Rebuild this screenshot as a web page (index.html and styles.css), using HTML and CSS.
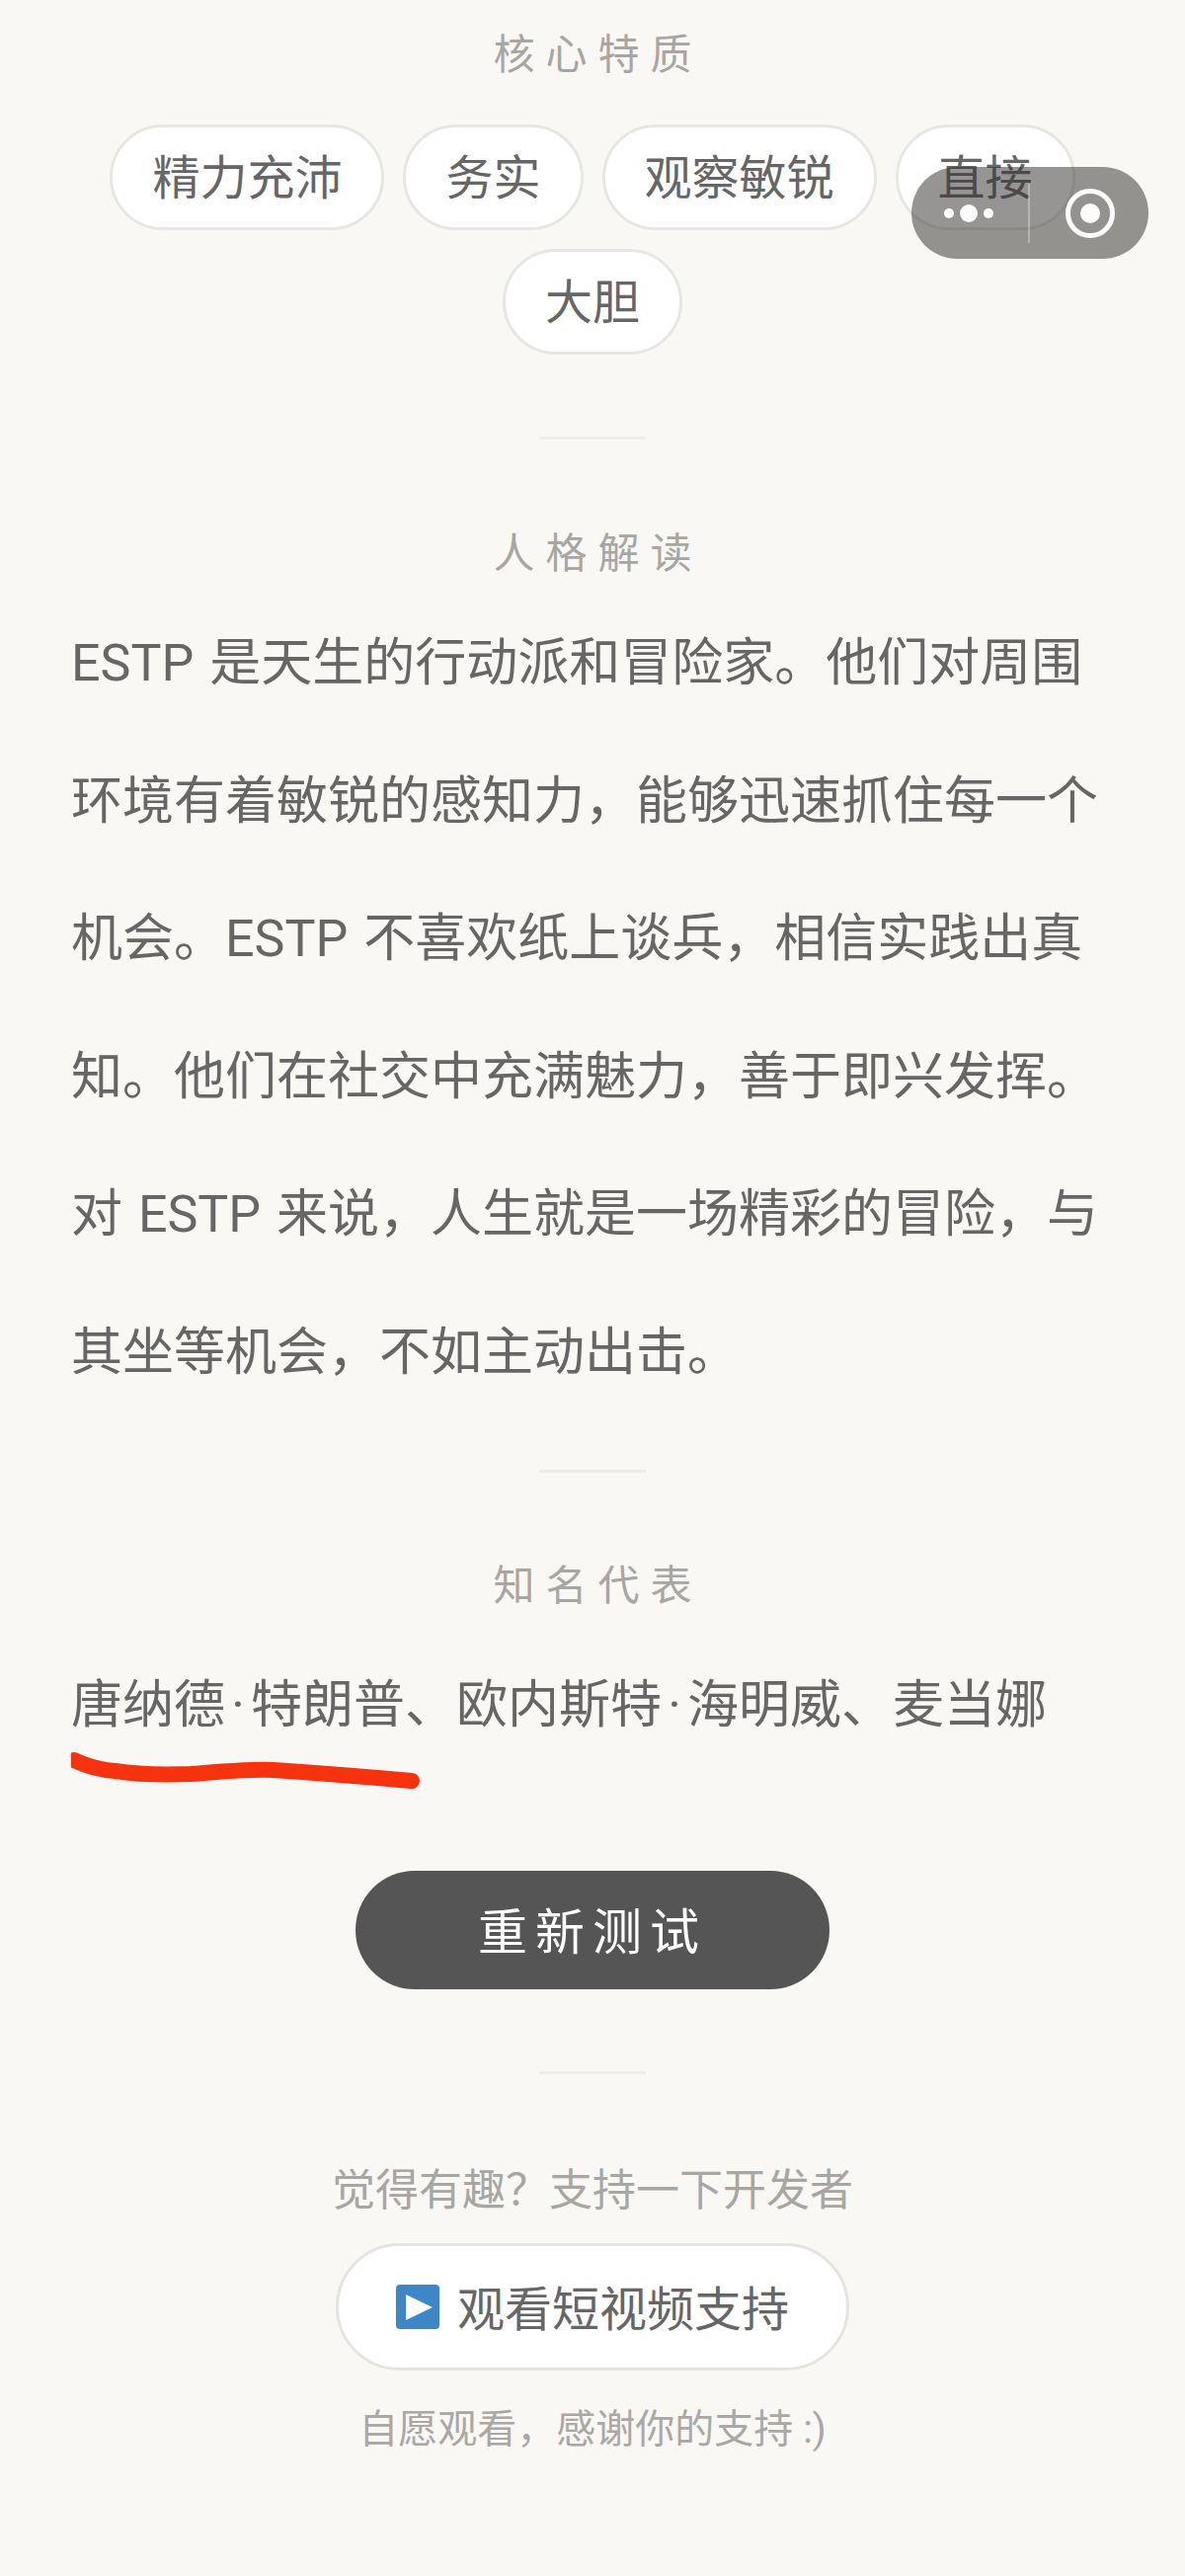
FILE: index.html
```html
<!DOCTYPE html>
<html lang="zh-CN">
<head>
  <meta charset="UTF-8" />
  <meta name="viewport" content="width=device-width, initial-scale=1.0"/>
  <title>ESTP</title>
  <link rel="stylesheet" href="styles.css">
</head>
<body>
  <div class="capsule">
    <svg class="capsule-icon" width="240" height="93" viewBox="0 0 240 93">
      <circle cx="38" cy="47" r="5" fill="#fff"/>
      <circle cx="58" cy="47" r="9" fill="#fff"/>
      <circle cx="78" cy="47" r="5" fill="#fff"/>
      <rect x="118" y="17" width="2" height="60" fill="rgba(255,255,255,0.3)"/>
      <circle cx="181" cy="47" r="22.5" fill="none" stroke="#fff" stroke-width="5"/>
      <circle cx="181" cy="47" r="10" fill="#fff"/>
    </svg>
  </div>

  <main class="page">
    <h3 class="section-title title-first">核心特质</h3>
    <div class="tags">
      <span class="tag">精力充沛</span>
      <span class="tag">务实</span>
      <span class="tag">观察敏锐</span>
      <span class="tag">直接</span>
      <span class="tag">大胆</span>
    </div>

    <div class="divider"></div>

    <h3 class="section-title title-tight">人格解读</h3>
    <p class="desc">ESTP 是天生的行动派和冒险家。他们对周围环境有着敏锐的感知力，能够迅速抓住每一个机会。ESTP 不喜欢纸上谈兵，相信实践出真知。他们在社交中充满魅力，善于即兴发挥。对 ESTP 来说，人生就是一场精彩的冒险，与其坐等机会，不如主动出击。</p>

    <div class="divider divider-near"></div>

    <h3 class="section-title">知名代表</h3>
    <div class="people">
      唐纳德<span class="dot">·</span>特朗普、欧内斯特<span class="dot">·</span>海明威、麦当娜
      <svg class="scribble" width="360" height="50" viewBox="0 0 360 50">
        <path d="M3 10 C18 17 30 20 45 21 C70 25 95 25 121 24 C150 22 175 19 205 20 C250 23 300 27 345 31" fill="none" stroke="#f5330f" stroke-width="16" stroke-linecap="round"/>
      </svg>
    </div>

    <button class="retry" type="button">重新测试</button>

    <div class="divider"></div>

    <p class="support-text">觉得有趣？支持一下开发者</p>
    <button class="support-btn" type="button">
      <svg class="play-icon" width="44" height="45" viewBox="0 0 44 45">
        <rect width="44" height="45" rx="4" fill="#3d87c6"/>
        <path d="M10 10 L37 23 L10 36 Z" fill="#fff"/>
      </svg>
      <span class="support-label">观看短视频支持</span>
    </button>
    <p class="support-note">自愿观看，感谢你的支持 :)</p>
  </main>
</body>
</html>
```

FILE: styles.css
```css
body {
  margin: 0;
  background: #faf8f5;
  font-family: Roboto, "Noto Sans CJK SC", sans-serif;
  color: #666;
}

.page {
  box-sizing: border-box;
  height: 2608px;
  padding: 26px 72px 0;
  overflow: hidden;
}

.section-title {
  margin: 0 0 51px;
  padding-left: 11px;
  font-size: 42px;
  font-weight: 400;
  line-height: 60px;
  letter-spacing: 11px;
  text-align: center;
  color: #a8a6a2;
}

.title-first {
  margin-bottom: 40px;
}

.title-tight {
  margin-bottom: 11px;
}

.tags {
  display: flex;
  flex-wrap: wrap;
  justify-content: center;
  gap: 19px;
  margin: 0 -40px;
}

.tag {
  box-sizing: border-box;
  height: 107px;
  padding: 0 40px;
  border: 3px solid #e8e6e2;
  border-radius: 54px;
  background: #fff;
  font-size: 48px;
  line-height: 103px;
}

.divider {
  width: 108px;
  height: 3px;
  margin: 83px auto 86px;
  background: #eeece8;
}

.divider-near {
  margin-top: 49px;
  margin-bottom: 85px;
}

.desc {
  margin: 0;
  font-size: 52px;
  line-height: 139.5px;
  word-spacing: 3px;
}

.people {
  position: relative;
  font-size: 52px;
  line-height: 80px;
  white-space: nowrap;
}

.dot {
  display: inline-block;
  width: 26px;
  text-align: center;
}

.scribble {
  position: absolute;
  left: 0;
  top: 85px;
}

.retry {
  display: block;
  width: 480px;
  height: 120px;
  margin: 127px auto 0;
  padding: 0 0 4px;
  border: none;
  border-radius: 60px;
  background: #555;
  color: #fff;
  font-family: inherit;
  font-size: 50px;
  letter-spacing: 8px;
}

.support-text {
  margin: 0 0 23px;
  padding-top: 2px;
  font-size: 44px;
  line-height: 60px;
  text-align: center;
  color: #a8a6a2;
}

.support-btn {
  box-sizing: border-box;
  display: flex;
  align-items: center;
  justify-content: center;
  gap: 18px;
  width: 520px;
  height: 129px;
  margin: 0 auto;
  padding: 0;
  border: 3px solid #e6e4e0;
  border-radius: 65px;
  background: #fff;
  color: #666;
  font-family: inherit;
  font-size: 48px;
}

.support-label {
  margin-bottom: 4px;
}

.support-note {
  margin: 30px 0 0;
  font-size: 40px;
  line-height: 60px;
  text-align: center;
  color: #aaa8a4;
}

.capsule {
  position: absolute;
  left: 923px;
  top: 169px;
  width: 240px;
  height: 93px;
  border-radius: 47px;
  background: rgba(49, 48, 45, 0.51);
}

.capsule-icon {
  display: block;
}
```
